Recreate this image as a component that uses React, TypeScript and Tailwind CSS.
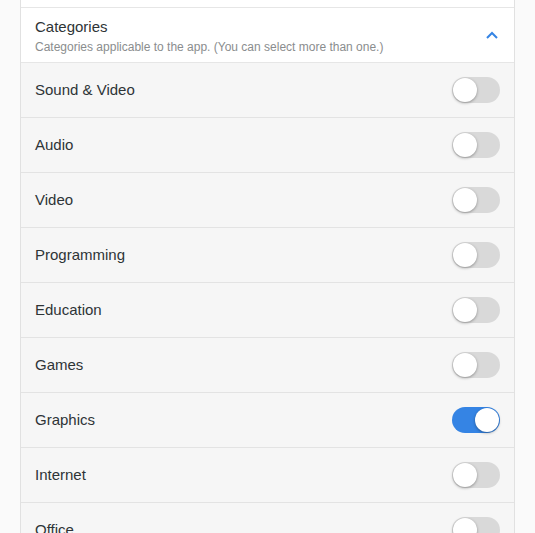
import React, { useState } from 'react';

const CATEGORIES = [
  { id: 'sound-video', label: 'Sound & Video', on: false },
  { id: 'audio', label: 'Audio', on: false },
  { id: 'video', label: 'Video', on: false },
  { id: 'programming', label: 'Programming', on: false },
  { id: 'education', label: 'Education', on: false },
  { id: 'games', label: 'Games', on: false },
  { id: 'graphics', label: 'Graphics', on: true },
  { id: 'internet', label: 'Internet', on: false },
  { id: 'office', label: 'Office', on: false },
];

function Switch({ checked, onChange }: { checked: boolean; onChange: () => void }) {
  return (
    <button
      onClick={onChange}
      className={`relative w-[48px] h-[26px] rounded-full transition-colors ${checked ? 'bg-[#3584e4]' : 'bg-[#d9d9d9]'}`}
    >
      <span
        className={`absolute top-px w-[24px] h-[24px] rounded-full bg-white shadow-[0_1px_3px_rgba(0,0,0,0.35)] transition-all ${checked ? 'left-[23px]' : 'left-px'}`}
      />
    </button>
  );
}

export default function App() {
  const [state, setState] = useState<Record<string, boolean>>(
    Object.fromEntries(CATEGORIES.map((c) => [c.id, c.on]))
  );

  return (
    <div className="h-[533px] overflow-hidden bg-[#fafafa] font-['Liberation_Sans',sans-serif] text-[#2e3436]">
      <div className="mx-[20px] w-[495px] border-x border-[#e1e1e1]">
        {/* previous section tail */}
        <div className="h-[8px] bg-white border-b border-[#e6e6e6]" />

        {/* Expander header */}
        <div className="h-[55px] bg-white border-b border-[#e6e6e6] flex items-center pl-[14px] pr-[14px]">
          <div className="flex-1 flex flex-col pt-[3px]">
            <span className="text-[15px] leading-[20px]">Categories</span>
            <span className="text-[12px] leading-[20px] text-[#8a8d8e]">
              Categories applicable to the app. (You can select more than one.)
            </span>
          </div>
          <svg width="12" height="8" viewBox="0 0 12 8" className="mr-[2px]">
            <path d="M1 7 L6 2 L11 7" fill="none" stroke="#3584e4" strokeWidth="2" />
          </svg>
        </div>

        {CATEGORIES.map((c) => (
          <div
            key={c.id}
            className="h-[55px] bg-[#f6f6f6] border-b border-[#e3e3e3] flex items-center pl-[14px] pr-[14px]"
          >
            <span className="flex-1 text-[15px]">{c.label}</span>
            <Switch
              checked={state[c.id]}
              onChange={() => setState((s) => ({ ...s, [c.id]: !s[c.id] }))}
            />
          </div>
        ))}
      </div>
    </div>
  );
}
